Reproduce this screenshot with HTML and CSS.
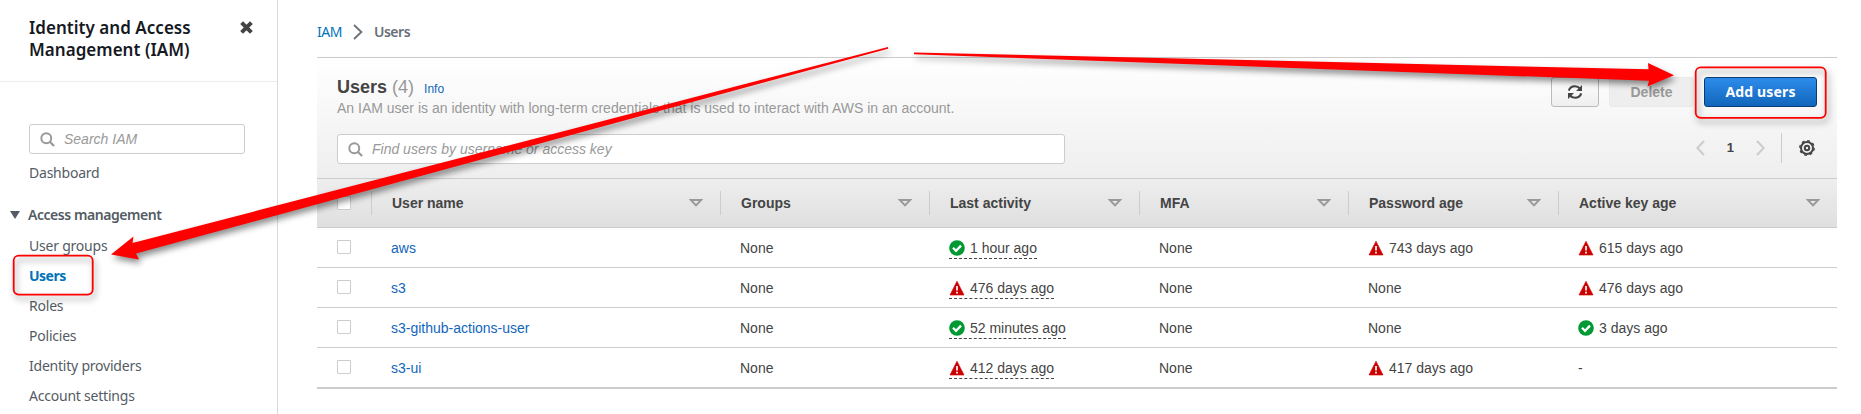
FILE: index.html
```html
<!DOCTYPE html>
<html lang="en">
<head>
<meta charset="utf-8">
<title>IAM Users</title>
<link rel="stylesheet" href="styles.css">
</head>
<body>
<svg class="defs" width="0" height="0">
  <symbol id="search" viewBox="0 0 16 16"><circle cx="6.7" cy="6.6" r="5.3" fill="none" stroke="#999" stroke-width="2.1"/><path d="M10.4 10.4 15 15" stroke="#999" stroke-width="2.4"/></symbol>
  <symbol id="sort" viewBox="0 0 14 8"><path d="M2 1.1h10L7 6.4z" fill="none" stroke="#999" stroke-width="2"/></symbol>
  <symbol id="ok" viewBox="0 0 16 16"><circle cx="8" cy="8" r="7.8" fill="#093"/><path d="M4 7.800l3 3 5-5.200" fill="none" stroke="#fff" stroke-width="2.3"/></symbol>
  <symbol id="warn" viewBox="0 0 16 16"><path d="M8 1.2 15 15H1z" fill="#c00" stroke="#c00" stroke-width=".6" stroke-linejoin="round"/><path d="M8 6v4.4M8 11.800v1.700" stroke="#fff" stroke-width="1.700"/></symbol>
</svg>
<div class="app">
  <aside class="sidebar">
    <header class="side-head">
      <h2 class="side-title">Identity and Access<br>Management (IAM)</h2>
      <svg class="close" width="13" height="13" viewBox="0 0 12 12"><path d="M1.500 1.500l9 9M10.500 1.500l-9 9" stroke="#444" stroke-width="3.700"/></svg>
    </header>
    <div class="search side-search"><svg width="15" height="15"><use href="#search"/></svg><span>Search IAM</span></div>
    <a class="nav dashboard">Dashboard</a>
    <div class="group"><i class="caret"></i><b>Access management</b></div>
    <nav class="links">
      <a class="nav">User groups</a>
      <a class="nav active">Users</a>
      <a class="nav">Roles</a>
      <a class="nav">Policies</a>
      <a class="nav">Identity providers</a>
      <a class="nav">Account settings</a>
    </nav>
  </aside>
  <main class="main">
    <div class="crumbs"><a class="crumb-link">IAM</a><svg width="10" height="16" viewBox="0 0 10 16"><path d="M1 1l7.4 7L1 15" fill="none" stroke="#687078" stroke-width="1.8"/></svg><b>Users</b></div>
    <section class="panel">
      <div class="intro">
        <div class="heading"><h1 class="title">Users <span class="count">(4)</span></h1><a class="info">Info</a></div>
        <p class="desc">An IAM user is an identity with long-term credentials that is used to interact with AWS in an account.</p>
        <div class="search find"><svg width="15" height="15"><use href="#search"/></svg><span>Find users by username or access key</span></div>
      </div>
      <div class="tools">
        <div class="buttons">
          <span class="btn refresh"><svg width="16" height="16" viewBox="0 0 16 16"><path d="M1.8 6.6C2.6 3.900 5 2.200 8 2.200c2 0 3.700.8 4.900 2.300M14.200 9.400c-.8 2.700-3.200 4.400-6.200 4.400-2 0-3.700-.8-4.900-2.300" fill="none" stroke="#444" stroke-width="2.100"/><path d="M15 1v6H9zM1 15V9h6z" fill="#444"/></svg></span>
          <span class="btn delete">Delete</span>
          <span class="btn primary">Add users</span>
        </div>
        <div class="pager">
          <svg width="9" height="16" viewBox="0 0 9 16"><path d="M8 1 1.300 8 8 15" fill="none" stroke="#ccc" stroke-width="2"/></svg>
          <b>1</b>
          <svg width="9" height="16" viewBox="0 0 9 16"><path d="M1 1l6.700 7L1 15" fill="none" stroke="#ccc" stroke-width="2"/></svg>
          <i class="rule"></i>
          <svg width="16" height="16" viewBox="0 0 16 16"><circle cx="8" cy="8" r="6" fill="none" stroke="#444" stroke-width="2"/><circle cx="8" cy="8" r="7.200" fill="none" stroke="#444" stroke-width="1.400" stroke-dasharray="2.827 2.827"/><circle cx="8" cy="8" r="2.200" fill="none" stroke="#444" stroke-width="2"/></svg>
        </div>
      </div>
    </section>
    <section class="table">
      <div class="row head">
        <div class="cell"><i class="box"></i></div>
        <div class="cell">User name<svg width="14" height="8"><use href="#sort"/></svg></div>
        <div class="cell">Groups<svg width="14" height="8"><use href="#sort"/></svg></div>
        <div class="cell">Last activity<svg width="14" height="8"><use href="#sort"/></svg></div>
        <div class="cell">MFA<svg width="14" height="8"><use href="#sort"/></svg></div>
        <div class="cell">Password age<svg width="14" height="8"><use href="#sort"/></svg></div>
        <div class="cell">Active key age<svg width="14" height="8"><use href="#sort"/></svg></div>
      </div>
      <div class="row">
        <div class="cell"><i class="box"></i></div><div class="cell"><a class="user">aws</a></div><div class="cell">None</div>
        <div class="cell"><span class="status dashed"><svg width="16" height="16"><use href="#ok"/></svg>1 hour ago</span></div><div class="cell">None</div>
        <div class="cell"><span class="status"><svg width="16" height="16"><use href="#warn"/></svg>743 days ago</span></div>
        <div class="cell"><span class="status"><svg width="16" height="16"><use href="#warn"/></svg>615 days ago</span></div>
      </div>
      <div class="row">
        <div class="cell"><i class="box"></i></div><div class="cell"><a class="user">s3</a></div><div class="cell">None</div>
        <div class="cell"><span class="status dashed"><svg width="16" height="16"><use href="#warn"/></svg>476 days ago</span></div><div class="cell">None</div>
        <div class="cell">None</div>
        <div class="cell"><span class="status"><svg width="16" height="16"><use href="#warn"/></svg>476 days ago</span></div>
      </div>
      <div class="row">
        <div class="cell"><i class="box"></i></div><div class="cell"><a class="user">s3-github-actions-user</a></div><div class="cell">None</div>
        <div class="cell"><span class="status dashed"><svg width="16" height="16"><use href="#ok"/></svg>52 minutes ago</span></div><div class="cell">None</div>
        <div class="cell">None</div>
        <div class="cell"><span class="status"><svg width="16" height="16"><use href="#ok"/></svg>3 days ago</span></div>
      </div>
      <div class="row last">
        <div class="cell"><i class="box"></i></div><div class="cell"><a class="user">s3-ui</a></div><div class="cell">None</div>
        <div class="cell"><span class="status dashed"><svg width="16" height="16"><use href="#warn"/></svg>412 days ago</span></div><div class="cell">None</div>
        <div class="cell"><span class="status"><svg width="16" height="16"><use href="#warn"/></svg>417 days ago</span></div>
        <div class="cell">-</div>
      </div>
    </section>
  </main>
</div>
<svg class="marks" width="1861" height="414" viewBox="0 0 1861 414">
  <g class="mark" fill="#f00">
    <path d="M111 254.500 133.500 236.500 132.500 243 888 47v1.700L136 253.500l3 6z"/>
    <path d="M914 52.500 1648.500 69.300 1648 63l26 12.300L1647.500 86.500l1.500-5.700L914 54.300z"/>
  </g>
  <g class="mark" fill="none" stroke="#f00" stroke-width="1.800">
    <rect x="13.700" y="255.600" width="79" height="39" rx="5"/>
    <rect x="1695.700" y="67.300" width="130" height="50.500" rx="5"/>
  </g>
</svg>
</body>
</html>
```
FILE: styles.css
```css
* { box-sizing: border-box; }
body { margin: 0; background: #fff; color: #444; font: 14px/20px "Liberation Sans", Arial, sans-serif; }
h1, h2, p { margin: 0; }
svg { display: block; flex: none; }
.defs { position: absolute; }
.app { display: flex; height: 414px; overflow: hidden; }

.sidebar { width: 278px; flex: none; border-right: 1px solid #d5dbdb; font-family: "Noto Sans", sans-serif; color: #545b64; }
.side-head { display: flex; justify-content: space-between; height: 82px; padding: 17px 24px 0 29px; border-bottom: 1px solid #eaeded; }
.side-title { color: #16191f; font-size: 17px; line-height: 22px; font-weight: 600; letter-spacing: .03px; white-space: nowrap; }
.close { margin-top: 4px; }
.search { display: flex; align-items: center; height: 30px; padding-left: 10px; gap: 9px; border: 1px solid #ccc; border-radius: 3px; background: #fff; color: #999; font: italic 14px/20px "Liberation Sans", Arial, sans-serif; }
.side-search { width: 216px; margin: 42px 0 0 29px; }
.nav { display: block; height: 30px; line-height: 30px; padding-left: 29px; letter-spacing: -.22px; }
.dashboard { margin-top: 4px; }
.group { display: flex; align-items: center; height: 30px; margin-top: 12px; padding-left: 10px; gap: 8px; }
.group b { font-weight: 600; letter-spacing: -.45px; }
.links { padding-top: 1px; }
.caret { border: 5px solid transparent; border-top: 8px solid #545b64; border-bottom: 0; }
.nav.active { color: #0073bb; font-weight: 700; letter-spacing: -.5px; }

.main { width: 1520px; margin-left: 39px; }
.crumbs { display: flex; align-items: center; height: 57px; padding-top: 7px; gap: 11px; font-family: "Noto Sans", sans-serif; color: #687078; }
.crumbs b { font-weight: 600; letter-spacing: -.45px; }
.crumb-link { color: #0073bb; letter-spacing: -.5px; }
.panel { display: flex; justify-content: space-between; height: 122px; border: solid #ccc; border-width: 1px 0; padding: 0 20px; background: linear-gradient(#fff, #eee); }
.heading { display: flex; align-items: baseline; gap: 10px; padding-top: 18px; }
.title { font-size: 18px; line-height: 22px; }
.count { color: #999; font-weight: 400; }
.info { font-size: 12px; color: #1166bb; }
.desc { color: #999; margin-top: -1px; }
.find { width: 728px; margin-top: 16px; }
.find span, .side-search span { margin-top: -1px; }
.tools { display: flex; flex-direction: column; align-items: flex-end; }
.buttons { display: flex; gap: 10px; margin-top: 19px; }
.btn { display: flex; align-items: center; justify-content: center; height: 30px; border: 1px solid #bbb; border-radius: 3px; font: 700 14px/20px "Noto Sans", sans-serif; }
.refresh { width: 48px; background: linear-gradient(#fff, #eee); }
.delete { width: 85px; color: #999; background: #eee; border-color: #eaeaea; font-family: "Liberation Sans", sans-serif; }
.primary { width: 113px; color: #fff; border-color: #0a3c78; background: linear-gradient(#2d8ceb, #1166bb); letter-spacing: .15px; }
.pager { display: flex; align-items: center; gap: 22px; height: 30px; margin: 26px 2px 0 0; }
.pager b { font-size: 13px; }
.rule { width: 1px; height: 30px; background: #ccc; margin: 0 -5px 0 -6px; }

.row { display: grid; grid-template-columns: 55px 349px 209px 210px 209px 210px 278px; height: 40px; border-bottom: 1px solid #ccc; }
.cell { display: flex; align-items: center; padding-left: 19px; white-space: nowrap; }
.cell:first-child { padding-left: 20px; }
.row.last { height: 41px; border-bottom-width: 2px; }
.head { height: 49px; align-items: center; background: linear-gradient(#eee, #dfdfdf); font-weight: 700; }
.head .cell { height: 24px; justify-content: space-between; border-right: 1px solid #ccc; padding: 0 17px 0 20px; }
.head .cell:last-child { border: 0; }
.box { width: 14px; height: 14px; border: 1px solid #ccc; border-radius: 1px; background: #fff; margin-bottom: 1px; }
.user { color: #1166bb; }
.status { display: flex; align-items: center; gap: 5px; height: 21px; }
.dashed { height: 22px; margin-top: 1px; border-bottom: 1px dashed #444; }

/* Callout arrows and frames drawn over the console */
.marks { position: absolute; left: 0; top: 0; pointer-events: none; }
.mark { filter: drop-shadow(2px 4px 3px rgba(0, 0, 0, .45)); }
```
